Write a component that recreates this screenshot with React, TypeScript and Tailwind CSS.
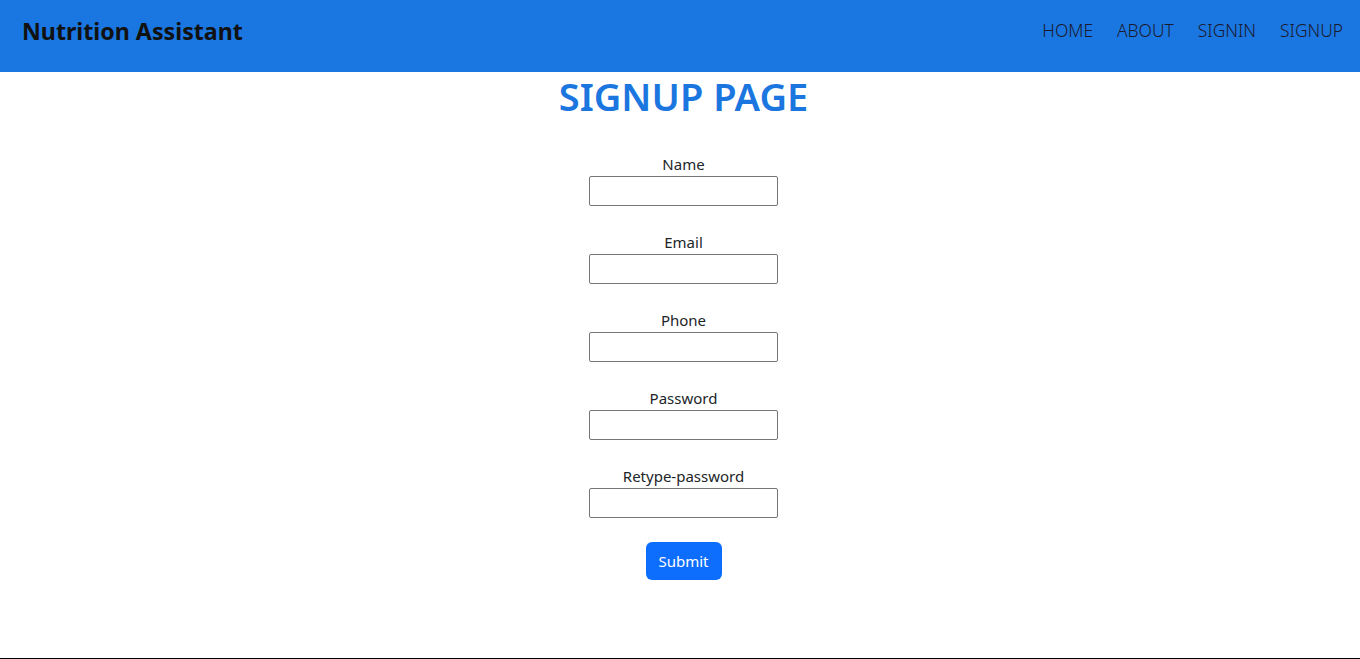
const fields = ["Name", "Email", "Phone", "Password", "Retype-password"];

export default function App() {
  return (
    <div
      className="h-[659px] flex flex-col bg-white border-b border-black"
      style={{ fontFamily: '"Segoe UI", "Noto Sans", sans-serif' }}
    >
      {/* Header */}
      <div className="h-[72px] bg-[#1a76e0] flex items-center justify-between pl-[22px] pr-[17px] pb-[9px]">
        <h1 className="text-[23.2px] font-bold text-[#111]">Nutrition Assistant</h1>
        <nav className="flex gap-[24px] text-[17.4px] text-[#1a1a2e] font-light pb-[3px]">
          <a href="#">HOME</a>
          <a href="#">ABOUT</a>
          <a href="#">SIGNIN</a>
          <a href="#">SIGNUP</a>
        </nav>
      </div>

      <div className="pl-[7px] flex flex-col">
        <h2 className="text-center text-[38px] leading-[48px] font-semibold text-[#1b76df]">
          SIGNUP PAGE
        </h2>

        {/* Form */}
        <form className="flex flex-col items-center mt-[32px] gap-[24px]">
          {fields.map((f) => (
            <div key={f} className="flex flex-col items-center">
              <label className="text-[15px] leading-[24px] text-[#212529]">{f}</label>
              <input
                type={f.toLowerCase().includes("password") ? "password" : "text"}
                className="w-[189px] h-[30px] border border-[#767676] rounded-[2px]"
              />
            </div>
          ))}
          <button
            type="button"
            className="w-[76px] h-[38px] rounded-[6px] bg-[#0d6efd] text-white text-[15px]"
          >
            Submit
          </button>
        </form>
      </div>
    </div>
  );
}
